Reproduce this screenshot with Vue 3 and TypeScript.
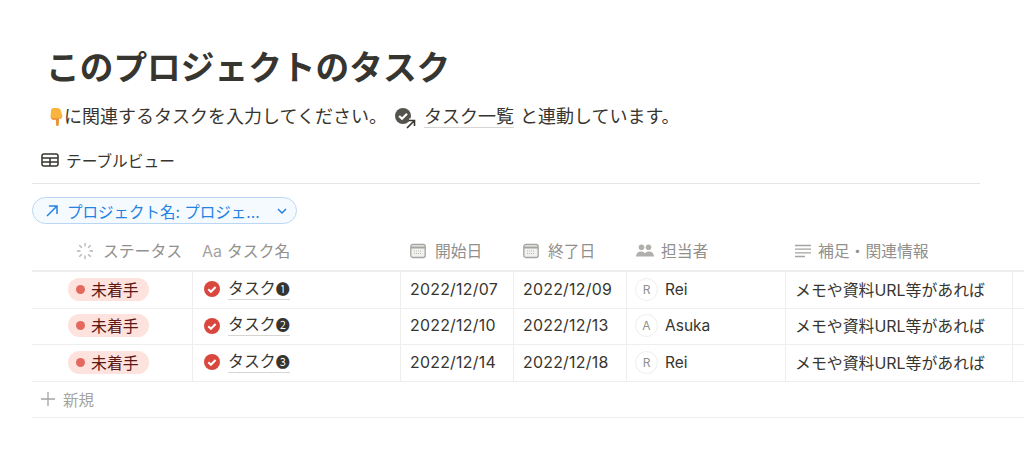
<script setup lang="ts">
interface Row { task: string; start: string; end: string; initial: string; person: string }
const rows: Row[] = [
  { task: '❶', start: '2022/12/07', end: '2022/12/09', initial: 'R', person: 'Rei' },
  { task: '❷', start: '2022/12/10', end: '2022/12/13', initial: 'A', person: 'Asuka' },
  { task: '❸', start: '2022/12/14', end: '2022/12/18', initial: 'R', person: 'Rei' },
]
</script>

<template>
  <main class="page">
    <h1 class="title">このプロジェクトのタスク</h1>
    <p class="desc">
      <svg class="hand" width="17" height="20" viewBox="0 0 17 20">
        <path d="M5.500 1H9c2.200 0 3.600 1.200 4 3l1.300 4.800c.3 1.500-.5 2.700-1.900 2.700H11l-.4 6.300c-.1 1.600-2.300 1.600-2.500 0L7.700 13 5.400 12.800C3.600 12.600 2.500 11.400 2.500 9.800L3 3.500C3.100 2 4 1 5.500 1Z" fill="#f9b43e"/>
        <path d="M8 12.500 8.200 17.800c.2 1.500 2.200 1.500 2.300 0l.5-6.300h1.400c.8 0 1.400-.4 1.700-1-1.500.5-3 .6-4.500.7L5.200 11.200c-1 0-1.900-.5-2.400-1.400.3 1.500 1.300 2.800 2.700 3z" fill="#ea8f3b"/>
      </svg>
      <span class="lead">に関連するタスクを入力してください。</span>
      <span class="link">
        <svg class="link-icon" width="24" height="24" viewBox="0 0 24 24">
          <circle cx="9" cy="9" r="8" fill="#55534e"/>
          <path d="m5.200 9 2.800 2.800 5-5" fill="none" stroke="#fff" stroke-width="2.200"/>
          <path d="m13 21 7.500-7.500M15 13.500h5.500V19" fill="none" stroke="#fff" stroke-width="4"/>
          <path d="m13 21 7.500-7.500M15 13.500h5.500V19" fill="none" stroke="#37352f" stroke-width="1.600"/>
        </svg>
        <span class="link-text">タスク一覧</span>
      </span>
      <span class="tail">と連動しています。</span>
    </p>

    <div class="tabs">
      <span class="tab">
        <svg width="18" height="14" viewBox="0 0 18 14">
          <rect x="1" y="1" width="16" height="12" rx="2" fill="none" stroke="#37352f" stroke-width="1.500"/>
          <path d="M1 5h16M1 9h16M9 5v8" stroke="#37352f" stroke-width="1.500"/>
        </svg>
        テーブルビュー
      </span>
    </div>

    <div class="filters">
      <span class="filter">
        <svg width="14" height="14" viewBox="0 0 14 14">
          <path d="M2 12 12 2M4 2h8v8" fill="none" stroke="#2383e2" stroke-width="1.500"/>
        </svg>
        <span class="filter-label">プロジェクト名: プロジェ...</span>
        <svg width="10" height="6" viewBox="0 0 10 6">
          <path d="m1 1 4 4 4-4" fill="none" stroke="#2383e2" stroke-width="1.500"/>
        </svg>
      </span>
    </div>

    <section class="table">
      <div class="row head">
        <div class="cell status-cell">
          <svg width="18" height="18" viewBox="0 0 18 18" stroke="#b5b4b0" stroke-width="1.300" fill="none">
            <path d="M9 1v3.500M9 13.500V17M1 9h3.500M13.500 9H17M3.300 3.300l2.500 2.500M12.200 12.200l2.500 2.500M3.300 14.700l2.500-2.500M12.200 5.800l2.500-2.500"/>
          </svg>
          ステータス
        </div>
        <div class="cell task-head"><span class="aa">Aa</span>タスク名</div>
        <div class="cell date-head">
          <svg width="16" height="16" viewBox="0 0 16 16"><rect x=".8" y="1.500" width="14.400" height="13" rx="2" fill="#f1f1ef" stroke="#a5a4a0" stroke-width="1.300"/><path d="M1 4.500h14" stroke="#a5a4a0" stroke-width="2"/><path d="M4 8h8M4 10.500h8" stroke="#b9b8b5" stroke-dasharray="1 1"/></svg>
          開始日
        </div>
        <div class="cell date-head">
          <svg width="16" height="16" viewBox="0 0 16 16"><rect x=".8" y="1.500" width="14.400" height="13" rx="2" fill="#f1f1ef" stroke="#a5a4a0" stroke-width="1.300"/><path d="M1 4.500h14" stroke="#a5a4a0" stroke-width="2"/><path d="M4 8h8M4 10.500h8" stroke="#b9b8b5" stroke-dasharray="1 1"/></svg>
          終了日
        </div>
        <div class="cell">
          <svg width="18" height="13" viewBox="0 0 18 13" fill="#b0afab"><circle cx="5.500" cy="3.300" r="2.800"/><circle cx="12.500" cy="3.300" r="2.800"/><path d="M0 12.500c0-3 2-5 5-5 1.800 0 3 .6 4 1.800 1-1.200 2.200-1.800 4-1.800 3 0 5 2 5 5z"/></svg>
          担当者
        </div>
        <div class="cell">
          <svg width="16" height="14" viewBox="0 0 16 14" stroke="#a5a4a0" stroke-width="1.300"><path d="M0 1.500h16M0 5.200h16M0 8.900h16M0 12.500h10"/></svg>
          補足・関連情報
        </div>
        <div class="cell end"></div>
      </div>

      <div v-for="(r, i) in rows" :key="i" class="row body">
        <div class="cell status-cell body-status">
          <span class="pill"><i class="dot"></i>未着手</span>
        </div>
        <div class="cell task">
          <svg width="16" height="16" viewBox="0 0 16 16">
            <circle cx="8" cy="8" r="8" fill="#d9473f"/>
            <path d="m4.300 8.200 2.600 2.500 4.700-4.700" fill="none" stroke="#fff" stroke-width="2.100"/>
          </svg>
          <span class="task-link">タスク<span class="num">{{ r.task }}</span></span>
        </div>
        <div class="cell date">{{ r.start }}</div>
        <div class="cell date">{{ r.end }}</div>
        <div class="cell person">
          <span class="avatar">{{ r.initial }}</span>{{ r.person }}
        </div>
        <div class="cell">メモや資料URL等があれば</div>
        <div class="cell end"></div>
      </div>

      <div class="new">
        <svg width="14" height="14" viewBox="0 0 14 14"><path d="M7 0v14M0 7h14" stroke="#a5a4a0" stroke-width="1.300"/></svg>
        新規
      </div>
    </section>
  </main>
</template>

<style>
html, body { margin: 0; background: #fff; overflow: hidden; }
</style>

<style scoped>
.page {
  width: 1024px;
  height: 469px;
  overflow: hidden;
  box-sizing: border-box;
  padding: 0 0 0 32px;
  color: #37352f;
  font-family: Inter, "Noto Sans CJK JP", sans-serif;
}
.title {
  margin: 0;
  padding: 45px 0 0 14px;
  height: 104px;
  box-sizing: border-box;
  font-size: 33.700px;
  line-height: 46px;
  font-weight: 700;
  white-space: nowrap;
}
.desc {
  margin: 0;
  height: 26px;
  padding-left: 16px;
  display: flex;
  align-items: center;
  font-size: 18px;
  line-height: 26px;
  white-space: nowrap;
}
.hand { flex: none; }
.lead { margin-left: -1px; }
.link { display: flex; align-items: center; margin-left: 7px; }
.link-icon { margin: 3px 6px 0 0; flex: none; }
.link-text { border-bottom: 1px solid #d6d5d2; line-height: 21px; }
.tail { margin-left: 6px; }
.tabs {
  width: 948px;
  height: 47px;
  box-sizing: border-box;
  margin-top: 7px;
  padding: 10px 0 0 9px;
  border-bottom: 1px solid #e6e5e3;
}
.tab {
  display: flex;
  align-items: center;
  gap: 7px;
  height: 26px;
  font-size: 15.700px;
}
.filters { padding-top: 13px; height: 40px; box-sizing: border-box; }
.filter {
  display: inline-flex;
  align-items: center;
  box-sizing: border-box;
  width: 265px;
  height: 27px;
  padding: 0 9px 0 12px;
  border: 1px solid #b9d7f5;
  border-radius: 14px;
  background: #f5faff;
  color: #2383e2;
  font-size: 15.500px;
}
.filter-label { margin: 0 auto 0 8px; white-space: nowrap; }
.row { display: grid; grid-template-columns: 161px 208px 113px 113px 159px 227px 12px; }
.head {
  height: 38px;
  margin-top: 8px;
  border-bottom: 2px solid #eeeeed;
  color: #91908c;
}
.body { height: 35.600px; border-bottom: 1px solid #eeeeed; }
.cell {
  display: flex;
  align-items: center;
  gap: 7px;
  padding-left: 9px;
  padding-bottom: 1px;
  font-size: 15.900px;
  white-space: nowrap;
  border-right: 1px solid #eeeeed;
  min-width: 0;
}
.head .cell { border-right: 0; font-size: 15.800px; }
.head .status-cell { padding-left: 44px; gap: 9px; }
.head .task-head { gap: 5px; }
.head .date-head { gap: 9px; }
.aa { font-size: 16px; color: #a5a4a0; }
.body-status { padding-left: 36px; }
.pill {
  display: inline-flex;
  align-items: center;
  gap: 6px;
  height: 23px;
  padding: 0 10px 0 8px;
  border-radius: 12px;
  background: #fde2dd;
  color: #5d1715;
}
.dot { width: 9px; height: 9px; border-radius: 50%; background: #e5685f; }
.task { padding-left: 11px; gap: 8px; font-weight: 400; }
.task-link {
  display: inline-flex;
  align-items: center;
  border-bottom: 1px solid #d6d5d2;
  line-height: 20px;
}
.num { font-size: 14px; line-height: 20px; }
.date { padding-left: 9px; letter-spacing: .25px; }
.person { padding-left: 8px; font-size: 15.500px; }
.avatar {
  display: flex;
  align-items: center;
  justify-content: center;
  width: 23px;
  height: 23px;
  border-radius: 50%;
  border: 1px solid #eeeeed;
  box-sizing: border-box;
  font-size: 12px;
  color: #91908c;
}
.end { border-right: 0; }
.new {
  display: flex;
  align-items: center;
  gap: 8px;
  height: 36.600px;
  width: 992px;
  padding: 0 0 1px 9px;
  box-sizing: border-box;
  border-bottom: 1px solid #eeeeed;
  font-size: 15.500px;
  color: #a5a4a0;
}
</style>
